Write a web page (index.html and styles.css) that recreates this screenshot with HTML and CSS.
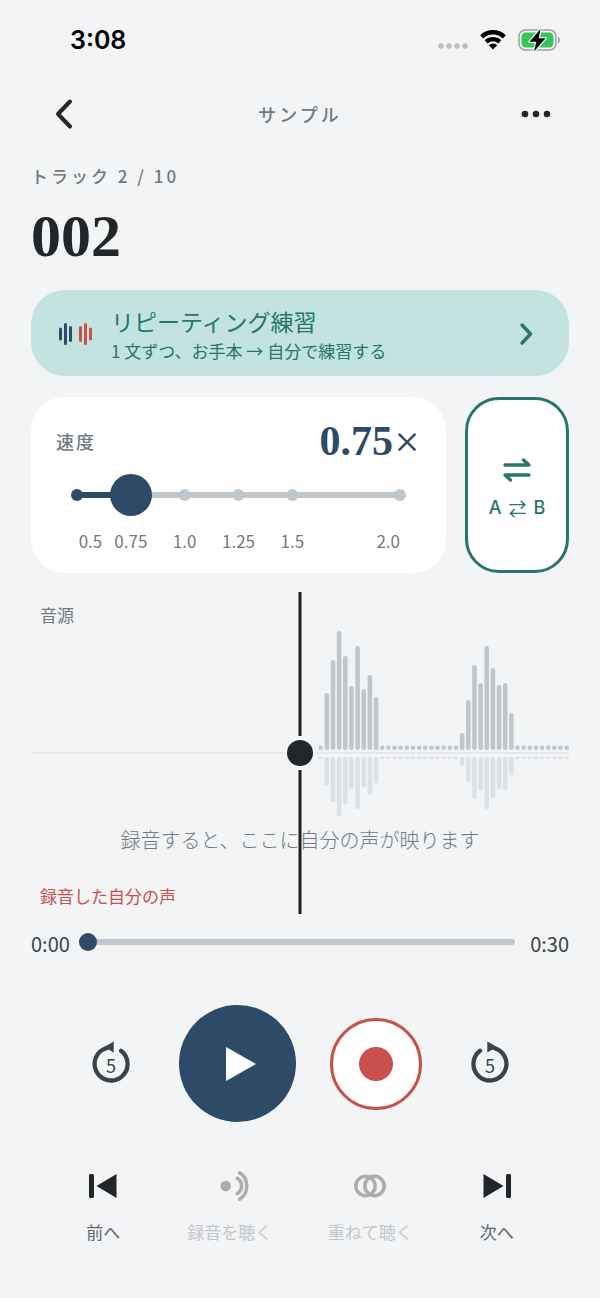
FILE: index.html
```html
<!DOCTYPE html>
<html lang="ja">
<head>
    <meta charset="UTF-8">
    <meta name="viewport" content="width=device-width, initial-scale=1.0">
    <title>サンプル - 002</title>
    <link rel="stylesheet" href="styles.css">
</head>
<body>
    <div class="status-bar">
        <span class="clock">3:08</span>
        <div class="status-icons">
            <svg width="30" height="24" viewBox="0 0 30 24" fill="#b9bbbd">
                <circle cx="3" cy="18" r="2.700"/>
                <circle cx="11" cy="18" r="2.700"/>
                <circle cx="19" cy="18" r="2.700"/>
                <circle cx="27" cy="18" r="2.700"/>
            </svg>
            <svg width="26" height="24" viewBox="0 0 26 24" fill="none" stroke="#000" stroke-width="4.400">
                <path d="M1.700 8.800A16.500 16.500 0 0 1 24.300 8.800"/>
                <path d="M6.200 13.800A10 10 0 0 1 19.800 13.800"/>
                <path d="M13 21.500L8.800 17.200A6 6 0 0 1 17.200 17.200Z" fill="#000" stroke="none"/>
            </svg>
            <svg width="42" height="24" viewBox="0 0 42 24" fill="none">
                <rect x="1" y="2" width="37" height="20" rx="6.500" stroke="#9fa2a3" stroke-width="1.500"/>
                <path d="M40 8.500C42.500 9.500 42.500 14.500 40 15.500Z" fill="#9fa2a3"/>
                <rect x="3.500" y="4.500" width="32" height="15" rx="4.500" fill="#35c759"/>
                <path d="M22.500 1L11.500 13.800H18.300L16 23.500L27.500 10.200H20.700Z" fill="#000" stroke="#f2f4f6" stroke-width="2.500" paint-order="stroke" stroke-linejoin="round"/>
            </svg>
        </div>
    </div>

    <header class="nav">
        <button class="nav-button" aria-label="戻る">
            <svg width="20" height="32" viewBox="0 0 20 32" fill="none" stroke="#232628" stroke-width="4" stroke-linecap="round" stroke-linejoin="round">
                <path d="M16 3.500L4 16L16 28.500"/>
            </svg>
        </button>
        <span class="nav-title">サンプル</span>
        <button class="nav-button" aria-label="メニュー">
            <svg width="30" height="8" viewBox="0 0 30 8" fill="#232628">
                <circle cx="4" cy="4" r="3.300"/>
                <circle cx="15" cy="4" r="3.300"/>
                <circle cx="26" cy="4" r="3.300"/>
            </svg>
        </button>
    </header>

    <main class="player">
        <p class="track-count">トラック 2 / 10</p>
        <h1 class="track-title">002</h1>

        <a class="practice" href="#practice">
            <svg width="34" height="28" viewBox="0 0 34 28" fill="none" stroke-width="3" stroke-linecap="round">
                <path d="M1.500 9V19M6.500 4.500V23.500M11.500 7.500V20.500" stroke="#2d4a66"/>
                <path d="M21.500 7.500V20.500M26.500 4.500V23.500M31.500 9V19" stroke="#c8514d"/>
            </svg>
            <span class="practice-text">
                <span class="practice-title">リピーティング練習</span>
                <span class="practice-note">1 文ずつ、お手本 → 自分で練習する</span>
            </span>
            <svg width="14" height="24" viewBox="0 0 14 24" fill="none" stroke="#28756b" stroke-width="3.500" stroke-linecap="round" stroke-linejoin="round">
                <path d="M3 3L11.500 12L3 21"/>
            </svg>
        </a>

        <div class="settings">
            <section class="speed">
                <div class="speed-head">
                    <label class="speed-label" for="speed">速度</label>
                    <output class="speed-value" for="speed">0.75<span class="times">×</span></output>
                </div>
                <div class="speed-slider">
                    <svg class="speed-rail" height="42">
                        <g fill="#bfc7cc" stroke="#bfc7cc">
                            <line x1="0" y1="21" x2="100%" y2="21" stroke-width="6"/>
                            <circle cx="33.333%" cy="21" r="6" stroke="none"/>
                            <circle cx="50%" cy="21" r="6" stroke="none"/>
                            <circle cx="66.667%" cy="21" r="6" stroke="none"/>
                            <circle cx="100%" cy="21" r="6" stroke="none"/>
                        </g>
                        <line x1="0" y1="21" x2="16.667%" y2="21" stroke="#2d4a66" stroke-width="6"/>
                        <circle cx="0" cy="21" r="6" fill="#2d4a66"/>
                    </svg>
                    <input class="speed-input" id="speed" type="range" min="0.5" max="2" step="0.25" value="0.75">
                </div>
                <div class="speed-scale">
                    <span>0.5</span>
                    <span>0.75</span>
                    <span>1.0</span>
                    <span>1.25</span>
                    <span>1.5</span>
                    <span>2.0</span>
                </div>
            </section>

            <button class="ab-button">
                <svg width="28" height="24" viewBox="0 0 28 24" fill="none" stroke="#28756b" stroke-width="3.400" stroke-linecap="round" stroke-linejoin="round">
                    <path d="M2 7H26L20.500 2"/>
                    <path d="M26 17H2L7.500 22"/>
                </svg>
                <span class="ab-text">A<span class="ab-arrows">⇄</span>B</span>
            </button>
        </div>

        <section class="wave">
            <svg class="wave-plot" viewBox="0 0 538 322">
                <path class="wave-axis" d="M0 161H253M285 161H538"/>
                <g id="bars" class="wave-bars"></g>
                <g id="mirror" class="wave-mirror"></g>
            </svg>
            <div class="wave-labels">
                <span class="wave-source">音源</span>
                <span class="wave-hint">録音すると、ここに自分の声が映ります</span>
                <span class="wave-voice">録音した自分の声</span>
            </div>
            <svg class="wave-plot" viewBox="0 0 538 322" fill="#232628">
                <path d="M269 0V144M269 178V322" stroke="#1d1f21" stroke-width="3"/>
                <circle cx="269" cy="161" r="13"/>
            </svg>
        </section>

        <div class="seek">
            <span class="time">0:00</span>
            <input class="seek-input" type="range" min="0" max="30" value="0" aria-label="再生位置">
            <span class="time">0:30</span>
        </div>

        <div class="controls">
            <button class="skip" aria-label="5秒戻る">
                <svg width="48" height="48" viewBox="-24 -24 48 48">
                    <path d="M10 -13.200A16.500 16.500 0 1 1 -4 -16" fill="none" stroke="#38434b" stroke-width="4.300" stroke-linecap="round"/>
                    <path d="M2.700 -22.500V-11.500L-7 -17Z" fill="#38434b"/>
                    <text class="skip-text" x="0" y="9">5</text>
                </svg>
            </button>
            <button class="play" aria-label="再生">
                <svg width="38" height="36" viewBox="0 0 38 36" fill="#fff">
                    <path d="M8 1L38 18L8 35Z"/>
                </svg>
            </button>
            <button class="record" aria-label="録音">
                <svg width="34" height="34" viewBox="0 0 34 34" fill="#c8514d">
                    <circle cx="17" cy="17" r="17"/>
                </svg>
            </button>
            <button class="skip" aria-label="5秒進む">
                <svg width="48" height="48" viewBox="-24 -24 48 48">
                    <path d="M-10 -13.200A16.500 16.500 0 1 0 4 -16" fill="none" stroke="#38434b" stroke-width="4.300" stroke-linecap="round"/>
                    <path d="M-2.700 -22.500V-11.500L7 -17Z" fill="#38434b"/>
                    <text class="skip-text" x="0" y="9">5</text>
                </svg>
            </button>
        </div>

        <div class="actions">
            <button class="action">
                <svg width="32" height="32" viewBox="0 0 32 32" fill="#232628">
                    <rect x="2" y="4" width="5" height="24" rx="1.500"/>
                    <path d="M29.500 4V28L9.500 16Z"/>
                </svg>
                前へ
            </button>
            <button class="action" disabled>
                <svg width="40" height="32" viewBox="0 0 40 32" fill="none" stroke="#abadaf" stroke-width="3.600" stroke-linecap="round">
                    <circle cx="15.700" cy="16" r="5.300" fill="#abadaf" stroke="none"/>
                    <path d="M27.300 8.300A9.100 9.100 0 0 1 27.300 23.700"/>
                    <path d="M29.700 2.800A15.800 15.800 0 0 1 29.700 29.200"/>
                </svg>
                録音を聴く
            </button>
            <button class="action" disabled>
                <svg width="32" height="32" viewBox="0 0 32 32" fill="none" stroke="#abadaf" stroke-width="3.500">
                    <circle cx="11.500" cy="16" r="9.700"/>
                    <circle cx="20.500" cy="16" r="9.700"/>
                </svg>
                重ねて聴く
            </button>
            <button class="action">
                <svg width="32" height="32" viewBox="0 0 32 32" fill="#232628">
                    <path d="M2.500 4V28L22.500 16Z"/>
                    <rect x="25" y="4" width="5" height="24" rx="1.500"/>
                </svg>
                次へ
            </button>
        </div>
    </main>

    <script src="script.js"></script>
</body>
</html>
```
FILE: styles.css
```css
* {
    margin: 0;
    padding: 0;
    box-sizing: border-box;
}

body {
    font-family: "Noto Sans CJK JP", sans-serif;
    background: #f2f4f6;
    color: #232628;
    min-height: 100vh;
}

button {
    background: none;
    border: none;
    font: inherit;
    color: inherit;
    cursor: pointer;
}

svg {
    display: block;
    flex-shrink: 0;
}

.status-bar {
    height: 80px;
    padding: 0 40px 0 70px;
    display: flex;
    align-items: center;
    justify-content: space-between;
}

.clock {
    font-family: Inter, sans-serif;
    font-size: 25px;
    font-weight: 600;
    color: #000;
}

.status-icons {
    display: flex;
    align-items: center;
    gap: 12px;
}

.nav {
    height: 68px;
    padding: 0 32px;
    display: flex;
    align-items: center;
    justify-content: space-between;
}

.nav-button {
    width: 64px;
    height: 64px;
    display: flex;
    align-items: center;
    justify-content: center;
}

.nav-title {
    font-size: 18px;
    font-weight: 500;
    letter-spacing: 3px;
    color: #717a82;
}

.player {
    padding: 16px 31px 54px;
}

.track-count {
    font-size: 17px;
    line-height: 24px;
    font-weight: 500;
    letter-spacing: 3px;
    color: #717a82;
}

.track-title {
    font-family: "Liberation Serif", serif;
    font-size: 60px;
    line-height: 64px;
    font-weight: 700;
    margin: 16px 0 22px;
}

.practice {
    display: flex;
    align-items: center;
    gap: 18px;
    padding: 14px 36px 12px 28px;
    border-radius: 34px;
    background: #c2e3df;
    color: #28756b;
    text-decoration: none;
}

.practice-text {
    flex: 1;
}

.practice-title,
.practice-note {
    display: block;
}

.practice-title {
    font-size: 23px;
    line-height: 34px;
}

.practice-note {
    font-size: 17px;
    line-height: 26px;
}

.settings {
    display: flex;
    gap: 19px;
    margin-top: 21px;
}

.speed {
    flex: 1;
    padding: 20px 25px;
    border-radius: 34px;
    background: #fff;
}

.speed-head {
    display: flex;
    align-items: center;
    justify-content: space-between;
    height: 48px;
    line-height: 48px;
}

.speed-label {
    font-size: 18px;
    font-weight: 500;
    letter-spacing: 2px;
    color: #717a82;
}

.speed-value {
    font-family: "Liberation Serif", serif;
    font-size: 42px;
    font-weight: 700;
    color: #2d4a66;
}

.times {
    font-family: "Noto Sans CJK JP", sans-serif;
    font-size: 28px;
    font-weight: 500;
    line-height: 28px;
    vertical-align: 2px;
}

.speed-slider {
    display: grid;
    margin-top: 9px;
}

.speed-rail,
.speed-input {
    grid-area: 1 / 1;
}

.speed-rail {
    width: calc(100% - 42px);
    margin: 0 21px;
    overflow: visible;
}

.speed-input,
.seek-input {
    appearance: none;
    width: 100%;
    background: none;
    cursor: pointer;
}

.speed-input {
    height: 42px;
}

.speed-input::-webkit-slider-thumb {
    appearance: none;
    width: 42px;
    height: 42px;
    border-radius: 50%;
    background: #2d4a66;
}

.speed-scale {
    display: grid;
    grid-template-columns: 1fr 2fr 2fr 2fr 2fr 3fr;
    margin: 13px 21px 0;
    font-size: 17px;
    line-height: 24px;
    text-align: center;
    color: #717a82;
}

.speed-scale span:last-child {
    text-align: right;
}

.ab-button {
    width: 104px;
    padding-top: 8px;
    border: 3px solid #28756b;
    border-radius: 34px;
    background: #fff;
    color: #28756b;
    display: flex;
    flex-direction: column;
    align-items: center;
    justify-content: center;
    gap: 14px;
}

.ab-text {
    display: flex;
    gap: 7px;
    font-family: Inter, "Noto Sans CJK JP", sans-serif;
    font-size: 18px;
    line-height: 24px;
    font-weight: 500;
}

.ab-arrows {
    font-family: "Noto Sans CJK JP", sans-serif;
    font-weight: 400;
}

.wave {
    display: grid;
    margin-top: 19px;
}

.wave-plot,
.wave-labels {
    grid-area: 1 / 1;
    width: 100%;
}

.wave-axis {
    stroke: #e1e5e8;
    stroke-width: 1.5;
}

.wave-bars {
    fill: #bfc7cc;
}

.wave-mirror {
    fill: #dbe1e7;
}

.wave-labels {
    display: flex;
    flex-direction: column;
    padding: 10px 9px 5px;
    font-size: 17px;
    line-height: 26px;
}

.wave-source {
    color: #717a82;
}

.wave-hint {
    margin: auto 0 30px;
    font-size: 20px;
    font-weight: 300;
    text-align: center;
    color: #717a82;
}

.wave-voice {
    color: #c8514d;
}

.seek {
    display: flex;
    align-items: center;
    gap: 9px;
    height: 32px;
    margin-top: 12px;
}

.time {
    padding-top: 3px;
    font-size: 20px;
    line-height: 29px;
    color: #38434b;
}

.time:last-child {
    padding-left: 6px;
}

.seek-input {
    flex: 1;
    min-width: 0;
    height: 20px;
}

.seek-input::-webkit-slider-runnable-track {
    height: 6px;
    border-radius: 3px;
    background: #bfc7cc;
}

.seek-input::-webkit-slider-thumb {
    appearance: none;
    width: 18px;
    height: 18px;
    margin-top: -6px;
    border-radius: 50%;
    background: #2d4a66;
}

.controls {
    display: flex;
    align-items: center;
    justify-content: center;
    gap: 34px;
    margin-top: 47px;
}

.controls button {
    display: flex;
    align-items: center;
    justify-content: center;
    border-radius: 50%;
}

.skip {
    width: 68px;
    height: 68px;
}

.skip-text {
    font-size: 18px;
    text-anchor: middle;
    fill: #38434b;
}

.play {
    width: 117px;
    height: 117px;
    background: #2d4a66;
}

.record {
    width: 92px;
    height: 92px;
    border: 3px solid #c8514d;
    background: #fff;
}

.actions {
    display: grid;
    grid-template-columns: 4fr 5fr 5fr 4fr;
    margin-top: 48px;
    padding: 0 16px;
}

.action {
    display: flex;
    flex-direction: column;
    align-items: center;
    gap: 18px;
    font-size: 17px;
    line-height: 24px;
    color: #5f676e;
}

.action:disabled {
    color: #c3c7cb;
    cursor: default;
}
```
FILE: script.js
```js
const levels = [
    4, 57, 90, 119, 94, 64, 104, 61, 75, 53,
    4, 4, 4, 4, 4, 4, 4, 4, 4, 4, 4, 4, 4,
    17, 50, 85, 67, 104, 82, 65, 67, 37,
    4, 4, 4, 4, 4, 4, 4, 4, 4
];

function addBar(group, x, y, height, radius) {
    const rect = document.createElementNS('http://www.w3.org/2000/svg', 'rect');
    rect.setAttribute('x', x);
    rect.setAttribute('y', y);
    rect.setAttribute('width', 4.6);
    rect.setAttribute('height', height);
    rect.setAttribute('rx', radius);
    group.appendChild(rect);
}

const bars = document.getElementById('bars');
const mirror = document.getElementById('mirror');

levels.forEach((level, i) => {
    const x = 287.4 + i * 6.15;
    const height = Math.max(level, 4.6);
    addBar(bars, x, 158 - height, height, 2.3);
    addBar(mirror, x, 165, level / 2, level > 4 ? 2 : 1);
});
```
